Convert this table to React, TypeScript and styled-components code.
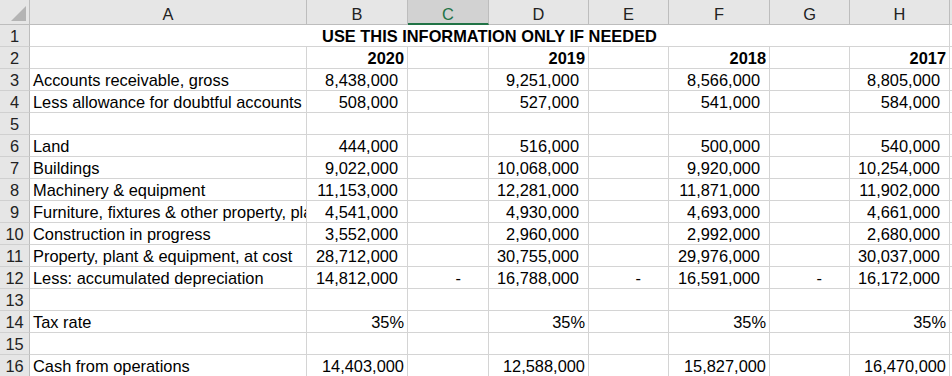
import React from "react";
import styled, { createGlobalStyle, css } from "styled-components";

const Global = createGlobalStyle`
  html, body { margin: 0; padding: 0; background: #ffffff; }
  body { font-family: "Liberation Sans", Arial, sans-serif; }
`;

const Sheet = styled.div`
  display: grid;
  grid-template-columns: 30px 277px 101px 81px 100px 80px 101px 80px 100px 1fr;
  grid-template-rows: 25px repeat(16, 22px);
  width: 952px;
  height: 376px;
  overflow: hidden;
  font-family: "Liberation Sans", Arial, sans-serif;
  font-size: 16.4px;
  color: #000;
`;

const Corner = styled.div`
  background: #e6e6e6;
  border-right: 1px solid #bdbdbd;
  border-bottom: 1px solid #bdbdbd;
  box-sizing: border-box;
  display: flex;
  align-items: flex-end;
  justify-content: flex-end;
  padding: 0 3px 3px 0;
`;

const ColHead = styled.div<{ $active?: boolean }>`
  box-sizing: border-box;
  background: ${(p) => (p.$active ? "#d2d2d2" : "#e6e6e6")};
  color: ${(p) => (p.$active ? "#217346" : "#222")};
  border-right: 1px solid #bdbdbd;
  border-bottom: ${(p) => (p.$active ? "2px solid #217346" : "1px solid #bdbdbd")};
  display: flex;
  align-items: flex-end;
  justify-content: center;
  line-height: 18px;
  padding-bottom: ${(p) => (p.$active ? "0" : "1px")};
`;

const RowHead = styled.div`
  box-sizing: border-box;
  background: #e6e6e6;
  color: #222;
  border-right: 1px solid #bdbdbd;
  border-bottom: 1px solid #d0d0d0;
  display: flex;
  align-items: flex-end;
  justify-content: center;
  line-height: 18px;
  padding-bottom: 1px;
`;

const Cell = styled.div<{ $align?: "left" | "right" | "center"; $bold?: boolean; $pad?: number; $noRight?: boolean }>`
  box-sizing: border-box;
  border-right: ${(p) => (p.$noRight ? "none" : "1px solid #d4d4d4")};
  border-bottom: 1px solid #d4d4d4;
  display: flex;
  align-items: flex-end;
  line-height: 18px;
  padding-bottom: 1px;
  white-space: nowrap;
  overflow: hidden;
  font-weight: ${(p) => (p.$bold ? 700 : 400)};
  ${(p) =>
    p.$align === "right"
      ? css`justify-content: flex-end; padding-right: ${p.$pad ?? 3}px;`
      : p.$align === "center"
      ? css`justify-content: center;`
      : css`justify-content: flex-start; padding-left: 3px;`}
`;

const Title = styled(Cell)`
  grid-column: 2 / 10;
`;

const cols = ["A", "B", "C", "D", "E", "F", "G", "H", ""];

type Row = {
  label?: string;
  vals?: string[];
  dash?: boolean;
  pad?: number;
  bold?: boolean;
};

const rows: Row[] = [
  {},
  { vals: ["2020", "2019", "2018", "2017"], bold: true, pad: 3 },
  { label: "Accounts receivable, gross", vals: ["8,438,000", "9,251,000", "8,566,000", "8,805,000"], pad: 9 },
  { label: "Less allowance for doubtful accounts", vals: ["508,000", "527,000", "541,000", "584,000"], pad: 9 },
  {},
  { label: "Land", vals: ["444,000", "516,000", "500,000", "540,000"], pad: 9 },
  { label: "Buildings", vals: ["9,022,000", "10,068,000", "9,920,000", "10,254,000"], pad: 9 },
  { label: "Machinery & equipment", vals: ["11,153,000", "12,281,000", "11,871,000", "11,902,000"], pad: 9 },
  { label: "Furniture, fixtures & other property, plant & equipment", vals: ["4,541,000", "4,930,000", "4,693,000", "4,661,000"], pad: 9 },
  { label: "Construction in progress", vals: ["3,552,000", "2,960,000", "2,992,000", "2,680,000"], pad: 9 },
  { label: "Property, plant & equipment, at cost", vals: ["28,712,000", "30,755,000", "29,976,000", "30,037,000"], pad: 9 },
  { label: "Less: accumulated depreciation", vals: ["14,812,000", "16,788,000", "16,591,000", "16,172,000"], pad: 9, dash: true },
  {},
  { label: "Tax rate", vals: ["35%", "35%", "35%", "35%"], pad: 3 },
  {},
  { label: "Cash from operations", vals: ["14,403,000", "12,588,000", "15,827,000", "16,470,000"], pad: 3 },
];

function DataRow({ row, index }: { row: Row; index: number }) {
  const cells: React.ReactNode[] = [];
  cells.push(<Cell key="a">{row.label ?? ""}</Cell>);
  for (let i = 0; i < 4; i++) {
    cells.push(
      <Cell key={`v${i}`} $align="right" $pad={row.pad} $bold={row.bold}>
        {row.vals ? row.vals[i] : ""}
      </Cell>
    );
    if (i < 3) {
      cells.push(
        <Cell key={`g${i}`} $align="right" $pad={27}>
          {row.dash ? "-" : ""}
        </Cell>
      );
    }
  }
  cells.push(<Cell key="x" $noRight />);
  return (
    <>
      <RowHead>{index + 1}</RowHead>
      {cells}
    </>
  );
}

export default function App() {
  return (
    <>
      <Global />
      <Sheet>
        <Corner>
          <svg width="15" height="15" viewBox="0 0 15 15">
            <polygon points="0,15 15,0 15,15" fill="#b4b4b4" />
          </svg>
        </Corner>
        {cols.map((c, i) => (
          <ColHead key={i} $active={c === "C"}>
            {c}
          </ColHead>
        ))}
        <RowHead>1</RowHead>
        <Title $align="center" $bold>
          USE THIS INFORMATION ONLY IF NEEDED
        </Title>
        <Cell $noRight />
        {rows.slice(1).map((r, i) => (
          <DataRow key={i} row={r} index={i + 1} />
        ))}
      </Sheet>
    </>
  );
}
